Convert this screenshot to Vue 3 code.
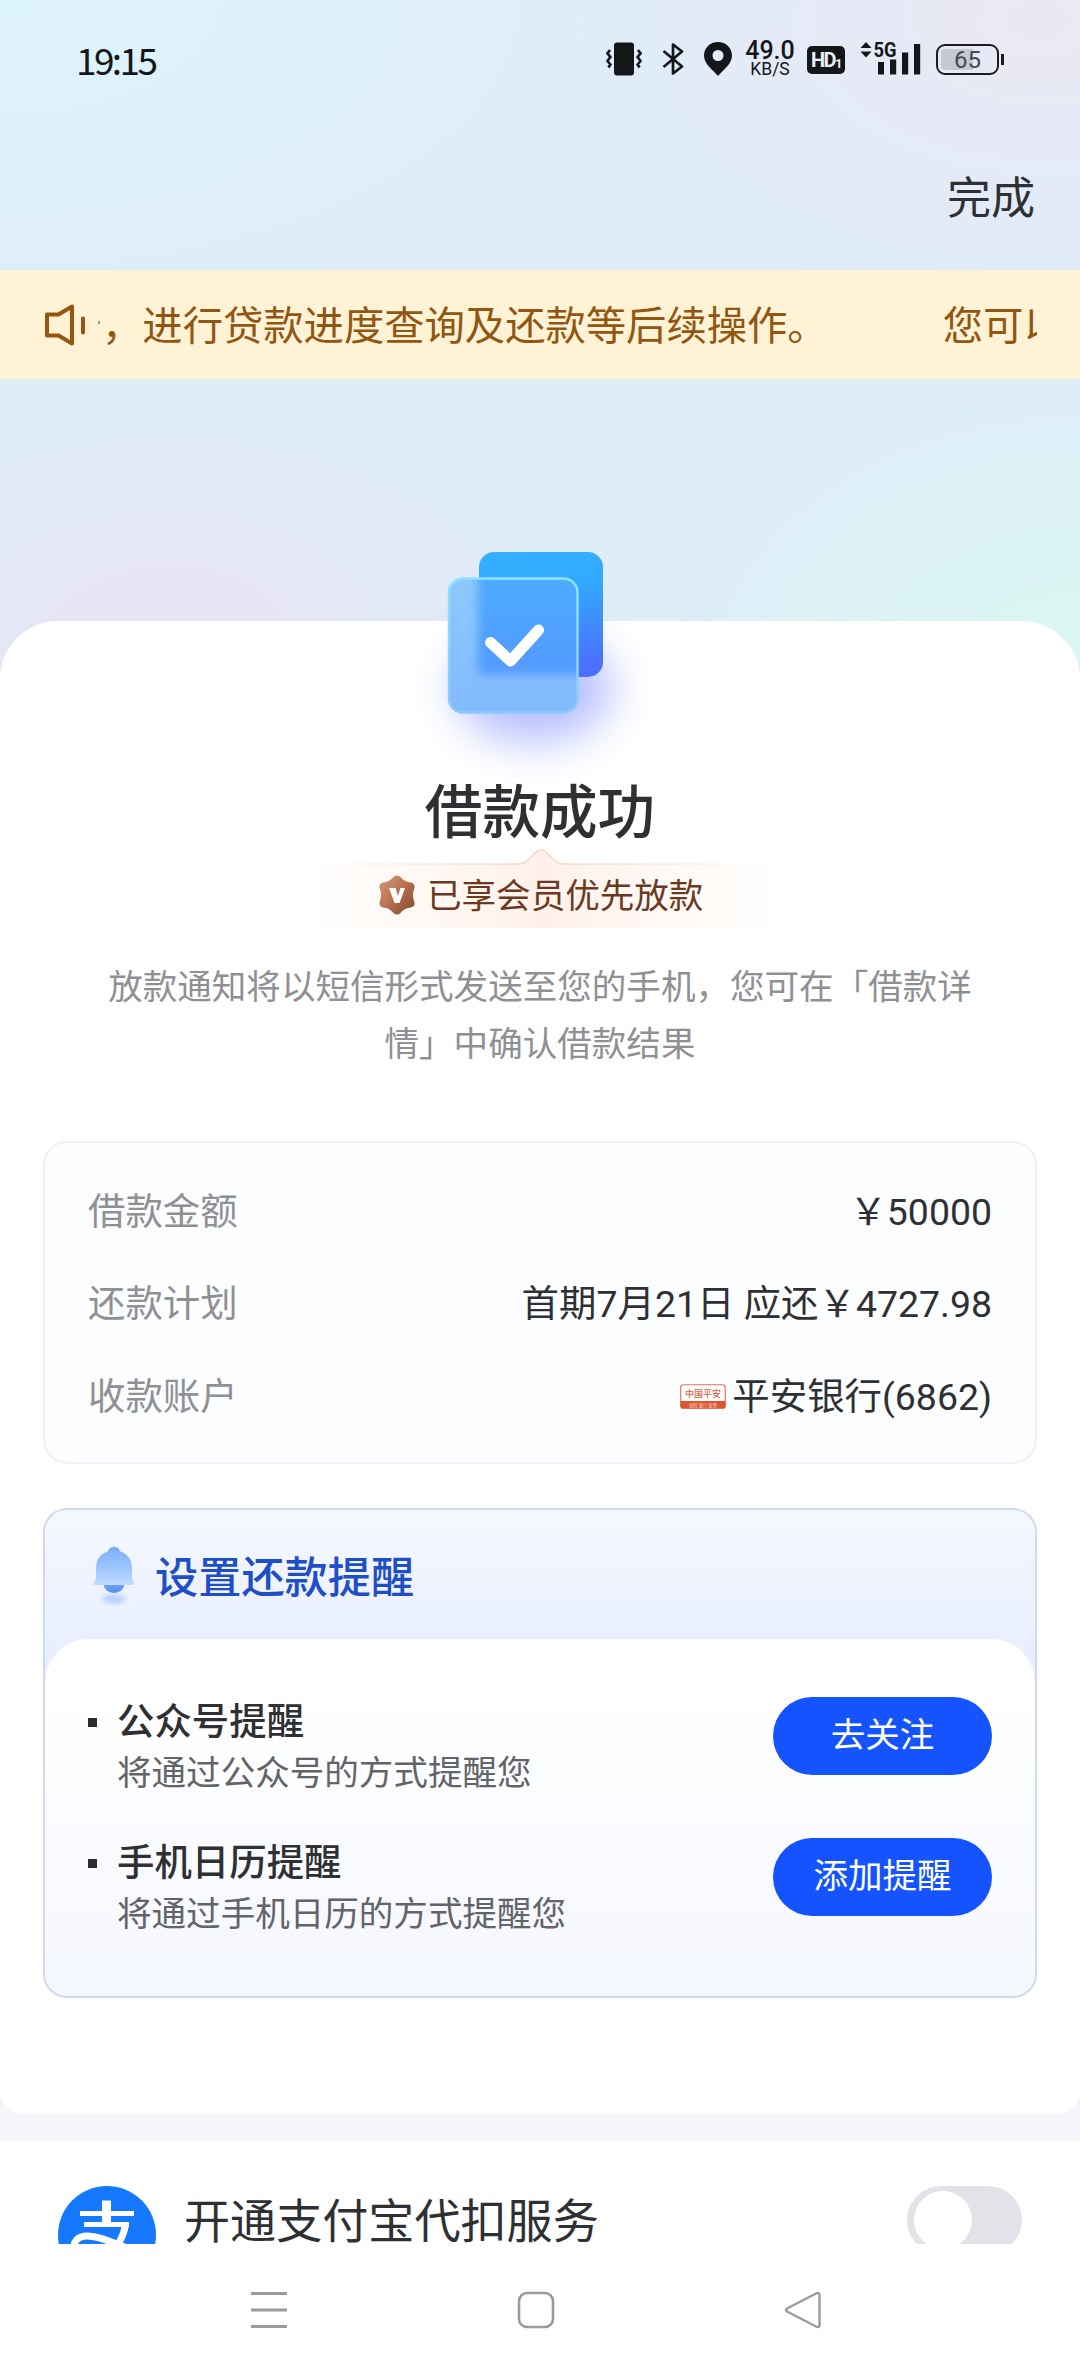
<script setup>
const loanRows = [
  { label: '借款金额', value: '￥50000' },
  { label: '还款计划', value: '首期7月21日 应还￥4727.98' },
  { label: '收款账户', value: '平安银行(6862)', bank: true },
]

const reminders = [
  { title: '公众号提醒', desc: '将通过公众号的方式提醒您', action: '去关注' },
  { title: '手机日历提醒', desc: '将通过手机日历的方式提醒您', action: '添加提醒' },
]
</script>

<template>
  <div class="page">
    <header class="status">
      <span class="time">19:15</span>
      <div class="status-icons">
        <svg class="vibrate" width="36" height="34" viewBox="0 0 36 34">
          <rect x="8" y="0.5" width="20" height="33" rx="3" fill="#14171a" />
          <path d="M4 8l-2.6 3.4L4.4 15l-3 4 3 3.500-2 3M32 8l2.600 3.400L31.600 15l3 4-3 3.500 2 3" fill="none" stroke="#14171a" stroke-width="2.600" />
        </svg>
        <svg class="bluetooth" width="22" height="34" viewBox="0 0 22 34">
          <path d="M1.500 9L20 24.500 11 31.500V2.500L20 9.500 1.500 25" fill="none" stroke="#14171a" stroke-width="2.700" stroke-linejoin="round" />
        </svg>
        <svg class="pin" width="28" height="34" viewBox="0 0 28 34">
          <path fill-rule="evenodd" fill="#14171a" d="M14 0C6 0 0 6 0 13.500 0 22 8 27 14 34c6-7 14-12 14-20.500C28 6 22 0 14 0zm0 8a5.500 5.500 0 1 1 0 11 5.500 5.500 0 0 1 0-11z" />
        </svg>
        <div class="speed"><b>49.0</b><span>KB/S</span></div>
        <div class="hd">HD<small>1</small></div>
        <svg class="signal" width="61" height="34" viewBox="0 0 61 34">
          <path fill="#14171a" d="M6 0l5.500 6H.5zM6 15.500L.5 9.500h11z" />
          <text x="13.500" y="15" font-size="20.500" font-weight="700" textLength="23" lengthAdjust="spacingAndGlyphs" fill="#14171a">5G</text>
          <path fill="#14171a" d="M18 20h6v12.500h-6zM30 17.500h6.200v15H30zM42 10.500h6.200v22H42zM54 2h6.200v30.500H54z" />
        </svg>
        <div class="battery"><i></i><span>65</span></div>
      </div>
    </header>

    <nav class="topbar"><span>完成</span></nav>

    <div class="notice">
      <svg width="42" height="44" viewBox="0 0 42 44">
        <path d="M2 11.500h11.500L27 3.500v37l-13.500-8H2z" fill="none" stroke="#97560f" stroke-width="4" stroke-linejoin="round" />
        <path d="M38 15.500v14" stroke="#97560f" stroke-width="4" stroke-linecap="round" />
      </svg>
      <div class="marquee">
        <i></i>
        <span>，进行贷款进度查询及还款等后续操作。</span>
        <span>您可以</span>
      </div>
    </div>

    <main class="card">
      <svg class="hero-icon" width="320" height="243" viewBox="0 0 320 243">
        <defs>
          <linearGradient id="back" x1="0" y1="0" x2="0.150" y2="1">
            <stop offset="0" stop-color="#34b0ff" />
            <stop offset="0.350" stop-color="#32aaff" />
            <stop offset="1" stop-color="#4b70ff" />
          </linearGradient>
          <linearGradient id="front" x1="0" y1="0" x2="0" y2="1">
            <stop offset="0" stop-color="#8cc8fb" />
            <stop offset="0.350" stop-color="#8ac4fd" />
            <stop offset="1" stop-color="#82baff" />
          </linearGradient>
          <linearGradient id="inner" x1="0" y1="0" x2="0" y2="1">
            <stop offset="0" stop-color="#4caeff" />
            <stop offset="1" stop-color="#5299ff" />
          </linearGradient>
          <linearGradient id="edge" x1="0.500" y1="0" x2="0.400" y2="1">
            <stop offset="0" stop-color="#8be4ff" />
            <stop offset="1" stop-color="#8cc8ff" />
          </linearGradient>
          <filter id="soft" x="-60%" y="-60%" width="220%" height="220%"><feGaussianBlur stdDeviation="22" /></filter>
          <filter id="frost" x="-20%" y="-20%" width="140%" height="140%"><feGaussianBlur stdDeviation="5" /></filter>
          <clipPath id="pane"><rect x="69" y="38.500" width="128" height="134" rx="14" /></clipPath>
          <clipPath id="below"><rect x="0" y="81" width="320" height="162" /></clipPath>
        </defs>
        <g clip-path="url(#below)">
          <ellipse cx="154" cy="148" rx="78" ry="54" fill="#7f90ff" opacity="0.580" filter="url(#soft)" />
        </g>
        <rect x="99" y="12" width="124" height="125" rx="15" fill="url(#back)" />
        <rect x="69" y="38.500" width="128" height="134" rx="14" fill="url(#front)" />
        <g clip-path="url(#pane)">
          <rect x="98" y="20" width="122" height="115" rx="6" fill="url(#inner)" filter="url(#frost)" />
        </g>
        <rect x="69" y="38.500" width="128.500" height="134" rx="14" fill="none" stroke="url(#edge)" stroke-width="2.500" />
        <path d="M110.500 102.500l20 18.500 28-31" fill="none" stroke="#fff" stroke-width="11" stroke-linecap="round" stroke-linejoin="round" />
      </svg>

      <h1>借款成功</h1>

      <div class="badge">
        <svg class="badge-bg" width="458" height="79" viewBox="0 0 458 79">
          <defs>
            <linearGradient id="peach" x1="0" y1="0" x2="1" y2="0">
              <stop offset="0" stop-color="#fff3ec" stop-opacity="0.050" />
              <stop offset="0.500" stop-color="#fff1e9" />
              <stop offset="1" stop-color="#fff3ec" stop-opacity="0.050" />
            </linearGradient>
            <linearGradient id="rim" gradientUnits="userSpaceOnUse" x1="0" y1="0" x2="458" y2="0">
              <stop offset="0" stop-color="#f6d9c6" stop-opacity="0" />
              <stop offset="0.500" stop-color="#f5d5c2" />
              <stop offset="1" stop-color="#f6d9c6" stop-opacity="0" />
            </linearGradient>
          </defs>
          <path fill="url(#peach)" d="M0 15h205c5 0 8-2 11-5l7-7q5-4 10 0l7 7c3 3 6 5 11 5h207v64H0z" />
          <path fill="none" stroke="url(#rim)" stroke-width="1.500" d="M0 15h205c5 0 8-2 11-5l7-7q5-4 10 0l7 7c3 3 6 5 11 5h207" />
        </svg>
        <div class="badge-text">
          <svg width="36" height="40" viewBox="0 0 36 40">
            <defs>
              <linearGradient id="bronze" x1="0" y1="0" x2="1" y2="1">
                <stop offset="0" stop-color="#dc9a7a" />
                <stop offset="0.500" stop-color="#b5704f" />
                <stop offset="1" stop-color="#83472c" />
              </linearGradient>
            </defs>
            <path fill="url(#bronze)" d="M14.500 2q3.500-3 7 0c3.500 4 6 5 10.500 5.500q4 1 3.500 5c-2 5-2 10 0 15q.5 4-3.500 5c-4.500.5-7 1.500-10.500 5.500q-3.500 3-7 0C11 34 8.500 33 4 32.500q-4-1-3.500-5c2-5 2-10 0-15q-.5-4 3.500-5C8.500 7 11 6 14.500 2z" />
            <path fill="#fff" d="M10 13h6.500l2.500 8 2.500-8H26l-5.500 15h-5z" />
          </svg>
          <span>已享会员优先放款</span>
        </div>
      </div>

      <p class="hint">放款通知将以短信形式发送至您的手机，您可在「借款详<br />情」中确认借款结果</p>

      <section class="details">
        <div v-for="row in loanRows" :key="row.label" class="row">
          <span class="label">{{ row.label }}</span>
          <div class="value">
            <svg v-if="row.bank" width="46" height="25" viewBox="0 0 46 25">
              <rect x="0.750" y="0.750" width="44.500" height="23.500" rx="2.500" fill="#fff" stroke="#dd7358" stroke-width="1.200" />
              <path d="M.5 17h45v5q0 2.500-2.500 2.500H3Q.5 24.500.5 22z" fill="#dd5530" />
              <text x="5" y="12.700" font-size="9" font-weight="500" textLength="36" fill="#d9603f">中国平安</text>
              <text x="9" y="22.500" font-size="4.500" textLength="28" fill="#fbd3c6">保险 银行 投资</text>
            </svg>
            <span>{{ row.value }}</span>
          </div>
        </div>
      </section>

      <section class="remind">
        <div class="remind-head">
          <svg width="44" height="60" viewBox="0 0 44 60">
            <defs>
              <linearGradient id="bell" x1="0" y1="0" x2="0" y2="1">
                <stop offset="0" stop-color="#82b2fa" />
                <stop offset="0.600" stop-color="#a3c9fd" />
                <stop offset="1" stop-color="#c3dcff" />
              </linearGradient>
              <linearGradient id="knob" x1="0" y1="0" x2="0" y2="1">
                <stop offset="0" stop-color="#8ab6f8" />
                <stop offset="1" stop-color="#5590ee" />
              </linearGradient>
              <filter id="haze" x="-50%" y="-80%" width="200%" height="260%"><feGaussianBlur stdDeviation="2.500" /></filter>
            </defs>
            <ellipse cx="22" cy="53" rx="12" ry="4.500" fill="#b3cfff" filter="url(#haze)" />
            <circle cx="22" cy="6.500" r="6" fill="url(#knob)" />
            <ellipse cx="22" cy="38" rx="10.500" ry="9" fill="url(#knob)" />
            <path d="M4 33V22.500C4 11 11.500 4.500 22 4.500S40 11 40 22.500V33l2.500 4q.5 2-1.500 2H3q-2 0-1.500-2z" fill="url(#bell)" />
          </svg>
          <h2>设置还款提醒</h2>
        </div>
        <ul>
          <li v-for="item in reminders" :key="item.title">
            <i></i>
            <div class="copy">
              <strong>{{ item.title }}</strong>
              <span>{{ item.desc }}</span>
            </div>
            <button>{{ item.action }}</button>
          </li>
        </ul>
      </section>
    </main>

    <section class="alipay">
      <svg width="98" height="98" viewBox="0 0 98 98">
        <circle cx="49" cy="49" r="49" fill="#1677ff" />
        <g fill="none" stroke="#fff">
          <path d="M22 27.500h54M26 38.500h45" stroke-width="5" />
          <path d="M48.500 14.500V38" stroke-width="9" />
          <path d="M67.500 38.500C65 54 54 73 34 74c-22 1-24-24-5-24 14 0 30 9 66 22" stroke-width="7" />
        </g>
      </svg>
      <span>开通支付宝代扣服务</span>
      <div class="switch"><i></i></div>
    </section>

    <footer class="nav">
      <svg width="38" height="38" viewBox="0 0 38 38"><path d="M1 2.500h36M1 19h36M1 35.500h36" stroke="#9b9b9b" stroke-width="3" /></svg>
      <svg width="38" height="38" viewBox="0 0 38 38"><rect x="2" y="2" width="34" height="34" rx="8" fill="none" stroke="#9b9b9b" stroke-width="2.600" /></svg>
      <svg width="38" height="38" viewBox="0 0 38 38"><path d="M3 17.500L32 2.500q3.500-1.500 3.500 1.500v30q0 3-3.500 1.500L3 20.500q-2-1.500 0-3z" fill="none" stroke="#9b9b9b" stroke-width="2.400" /></svg>
    </footer>
  </div>
</template>

<style>
body {
  background: #f4f6fa;
}
</style>

<style scoped>
.page {
  display: flex;
  flex-direction: column;
  width: 1080px;
  height: 2376px;
  overflow: hidden;
  box-sizing: border-box;
  font-family: Roboto, 'Noto Sans CJK SC', sans-serif;
  color: #2e3033;
  background:
    radial-gradient(420px 310px at 1080px 690px, #d9f8f0 0%, rgba(217, 248, 240, 0) 100%) no-repeat 0 0 / 1080px 690px,
    radial-gradient(400px 240px at 170px 640px, #e9e2f4 0%, rgba(233, 226, 244, 0) 100%) no-repeat 0 0 / 1080px 690px,
    radial-gradient(480px 300px at 1040px 20px, #ebe8f5 0%, rgba(235, 232, 245, 0) 100%) no-repeat 0 0 / 1080px 690px,
    radial-gradient(640px 330px at 0 0, #def4fc 0%, rgba(222, 244, 252, 0) 100%) no-repeat 0 0 / 1080px 690px,
    linear-gradient(#deedf8, #deedf8) no-repeat 0 0 / 1080px 690px,
    #f4f6fa;
}
svg {
  display: block;
  flex: none;
}
.status {
  display: flex;
  align-items: center;
  height: 118px;
  flex: none;
}
.time {
  width: 530px;
  padding-left: 76px;
  font: 400 37px/40px 'Noto Sans CJK SC', sans-serif;
  letter-spacing: -2.600px;
  color: #14171a;
  white-space: nowrap;
}
.status-icons {
  display: flex;
  align-items: center;
  color: #14171a;
}
.bluetooth {
  margin-left: 20px;
}
.pin {
  margin-left: 20px;
}
.speed {
  width: 50px;
  margin-left: 13px;
  text-align: center;
  white-space: nowrap;
}
.speed b {
  display: block;
  font-size: 25px;
  font-weight: 500;
  line-height: 20px;
}
.speed span {
  display: block;
  font-size: 17.500px;
  font-weight: 400;
  line-height: 17px;
}
.hd {
  display: flex;
  align-items: center;
  justify-content: center;
  width: 38px;
  height: 28px;
  margin: 2px 0 0 12px;
  border-radius: 5px;
  background: #14171a;
  color: #eceff8;
  font-size: 20px;
  font-weight: 700;
  letter-spacing: -1.500px;
}
.hd small {
  align-self: flex-end;
  font-size: 13px;
  line-height: 20px;
}
.signal {
  margin-left: 15px;
}
.battery {
  position: relative;
  width: 63px;
  height: 31px;
  margin-left: 15px;
  box-sizing: border-box;
  border: 2.500px solid #1a1d26;
  border-radius: 9px;
}
.battery::after {
  content: '';
  position: absolute;
  right: -7px;
  top: 8px;
  width: 3px;
  height: 11px;
  background: #1a1d26;
}
.battery i {
  display: block;
  width: 32px;
  height: 21px;
  margin: 3px;
  border-radius: 4px 0 0 4px;
  background: #c6c8d2;
}
.battery span {
  position: absolute;
  inset: 0;
  font-size: 24px;
  line-height: 28px;
  text-align: center;
  color: #454a54;
}
.topbar {
  display: flex;
  justify-content: flex-end;
  flex: none;
  height: 152px;
  padding: 9px 45px 0 0;
  box-sizing: border-box;
  font-size: 44px;
  line-height: 144px;
}
.notice {
  display: flex;
  align-items: center;
  flex: none;
  height: 109px;
  padding: 0 43px 0 45px;
  background: #fff2d5;
  color: #915712;
}
.marquee {
  display: flex;
  width: 940px;
  margin-left: 10px;
  padding-top: 4px;
  overflow: hidden;
  font-size: 40.320px;
  line-height: 60px;
  white-space: nowrap;
}
.marquee i {
  flex: none;
  align-self: center;
  width: 2px;
  height: 3px;
  margin: 0 2px 8px 1px;
  background: #b98f5a;
}
.marquee span {
  margin-right: 115px;
}
.card {
  display: flex;
  flex-direction: column;
  align-items: center;
  flex: none;
  height: 1493px;
  margin-top: 242px;
  border-radius: 58px 58px 24px 24px;
  background: #fff;
}
.hero-icon {
  margin-top: -81px;
}
h1 {
  margin: 2px 0 -2px;
  font-size: 57.600px;
  font-weight: 500;
  line-height: 58px;
}
.badge {
  position: relative;
  width: 458px;
  height: 79px;
  margin-top: 8px;
}
.badge-bg {
  position: absolute;
  top: 0;
  left: 2px;
}
.badge-text {
  position: relative;
  display: flex;
  align-items: center;
  padding: 25px 0 0 68px;
  color: #6b3921;
  font-size: 34.560px;
  line-height: 42px;
}
.badge-text span {
  margin: 1px 0 -1px 12px;
}
.hint {
  margin: 31px 0 0;
  text-align: center;
  color: #8f9094;
  font-size: 34.560px;
  line-height: 57px;
  white-space: nowrap;
}
.details {
  display: flex;
  flex-direction: column;
  width: 994px;
  height: 323px;
  margin-top: 68px;
  padding: 23px 43px 0;
  box-sizing: border-box;
  border: 2.500px solid #edf0f6;
  border-radius: 24px;
  background: #fcfdff;
  font-size: 37.440px;
}
.row {
  display: flex;
  flex: none;
  justify-content: space-between;
  height: 92.300px;
  line-height: 92.300px;
}
.label {
  color: #8f9094;
}
.value {
  display: flex;
  align-items: center;
  gap: 6px;
  white-space: nowrap;
}
.remind {
  width: 994px;
  height: 490px;
  margin-top: 44px;
  box-sizing: border-box;
  border: 2.500px solid #d1d9ec;
  border-radius: 24px;
  overflow: hidden;
  background: linear-gradient(#f5f8ff, #e5ecfe 180px);
}
.remind-head {
  display: flex;
  align-items: center;
  height: 129px;
  padding-left: 47px;
}
.remind-head svg {
  margin-top: 3px;
}
h2 {
  margin: 8px 0 0 19px;
  font-size: 43.200px;
  font-weight: 500;
  line-height: 60px;
  color: #1f4fc6;
}
ul {
  display: flex;
  flex-direction: column;
  height: 360px;
  margin: 0;
  padding: 58px 43px 0;
  box-sizing: border-box;
  border-radius: 44px 44px 0 0;
  background: linear-gradient(#fff, #fff 15%, #f4f7fe);
}
li {
  display: flex;
  height: 141px;
  list-style: none;
}
li i {
  width: 9px;
  height: 9px;
  margin-top: 21px;
  background: #2b2d31;
}
.copy {
  display: flex;
  flex-direction: column;
  flex: 1;
  margin-left: 20px;
}
.copy strong {
  font-size: 37.440px;
  font-weight: 500;
  line-height: 51px;
}
.copy span {
  color: #626469;
  font-size: 34.560px;
  line-height: 51px;
}
button {
  width: 219px;
  height: 78px;
  padding: 0 0 3px;
  border: 0;
  border-radius: 39px;
  background: #1553ff;
  color: #fff;
  font: 400 34.560px/70px Roboto, 'Noto Sans CJK SC', sans-serif;
}
.alipay {
  display: flex;
  align-items: flex-start;
  flex: none;
  height: 103px;
  margin-top: 27px;
  padding: 45px 58px 0;
  box-sizing: border-box;
  overflow: hidden;
  background: #fff;
}
.alipay span {
  flex: 1;
  margin-left: 28px;
  font-size: 46.080px;
  line-height: 72px;
}
.switch {
  width: 115px;
  height: 68px;
  padding: 5px 7px;
  box-sizing: border-box;
  border-radius: 34px;
  background: #e2e3e9;
}
.switch i {
  display: block;
  width: 58px;
  height: 58px;
  border-radius: 50%;
  background: #fff;
}
.nav {
  display: flex;
  align-items: center;
  justify-content: space-between;
  flex: 1;
  padding: 0 258px 0 250px;
  background: #fff;
}
</style>
